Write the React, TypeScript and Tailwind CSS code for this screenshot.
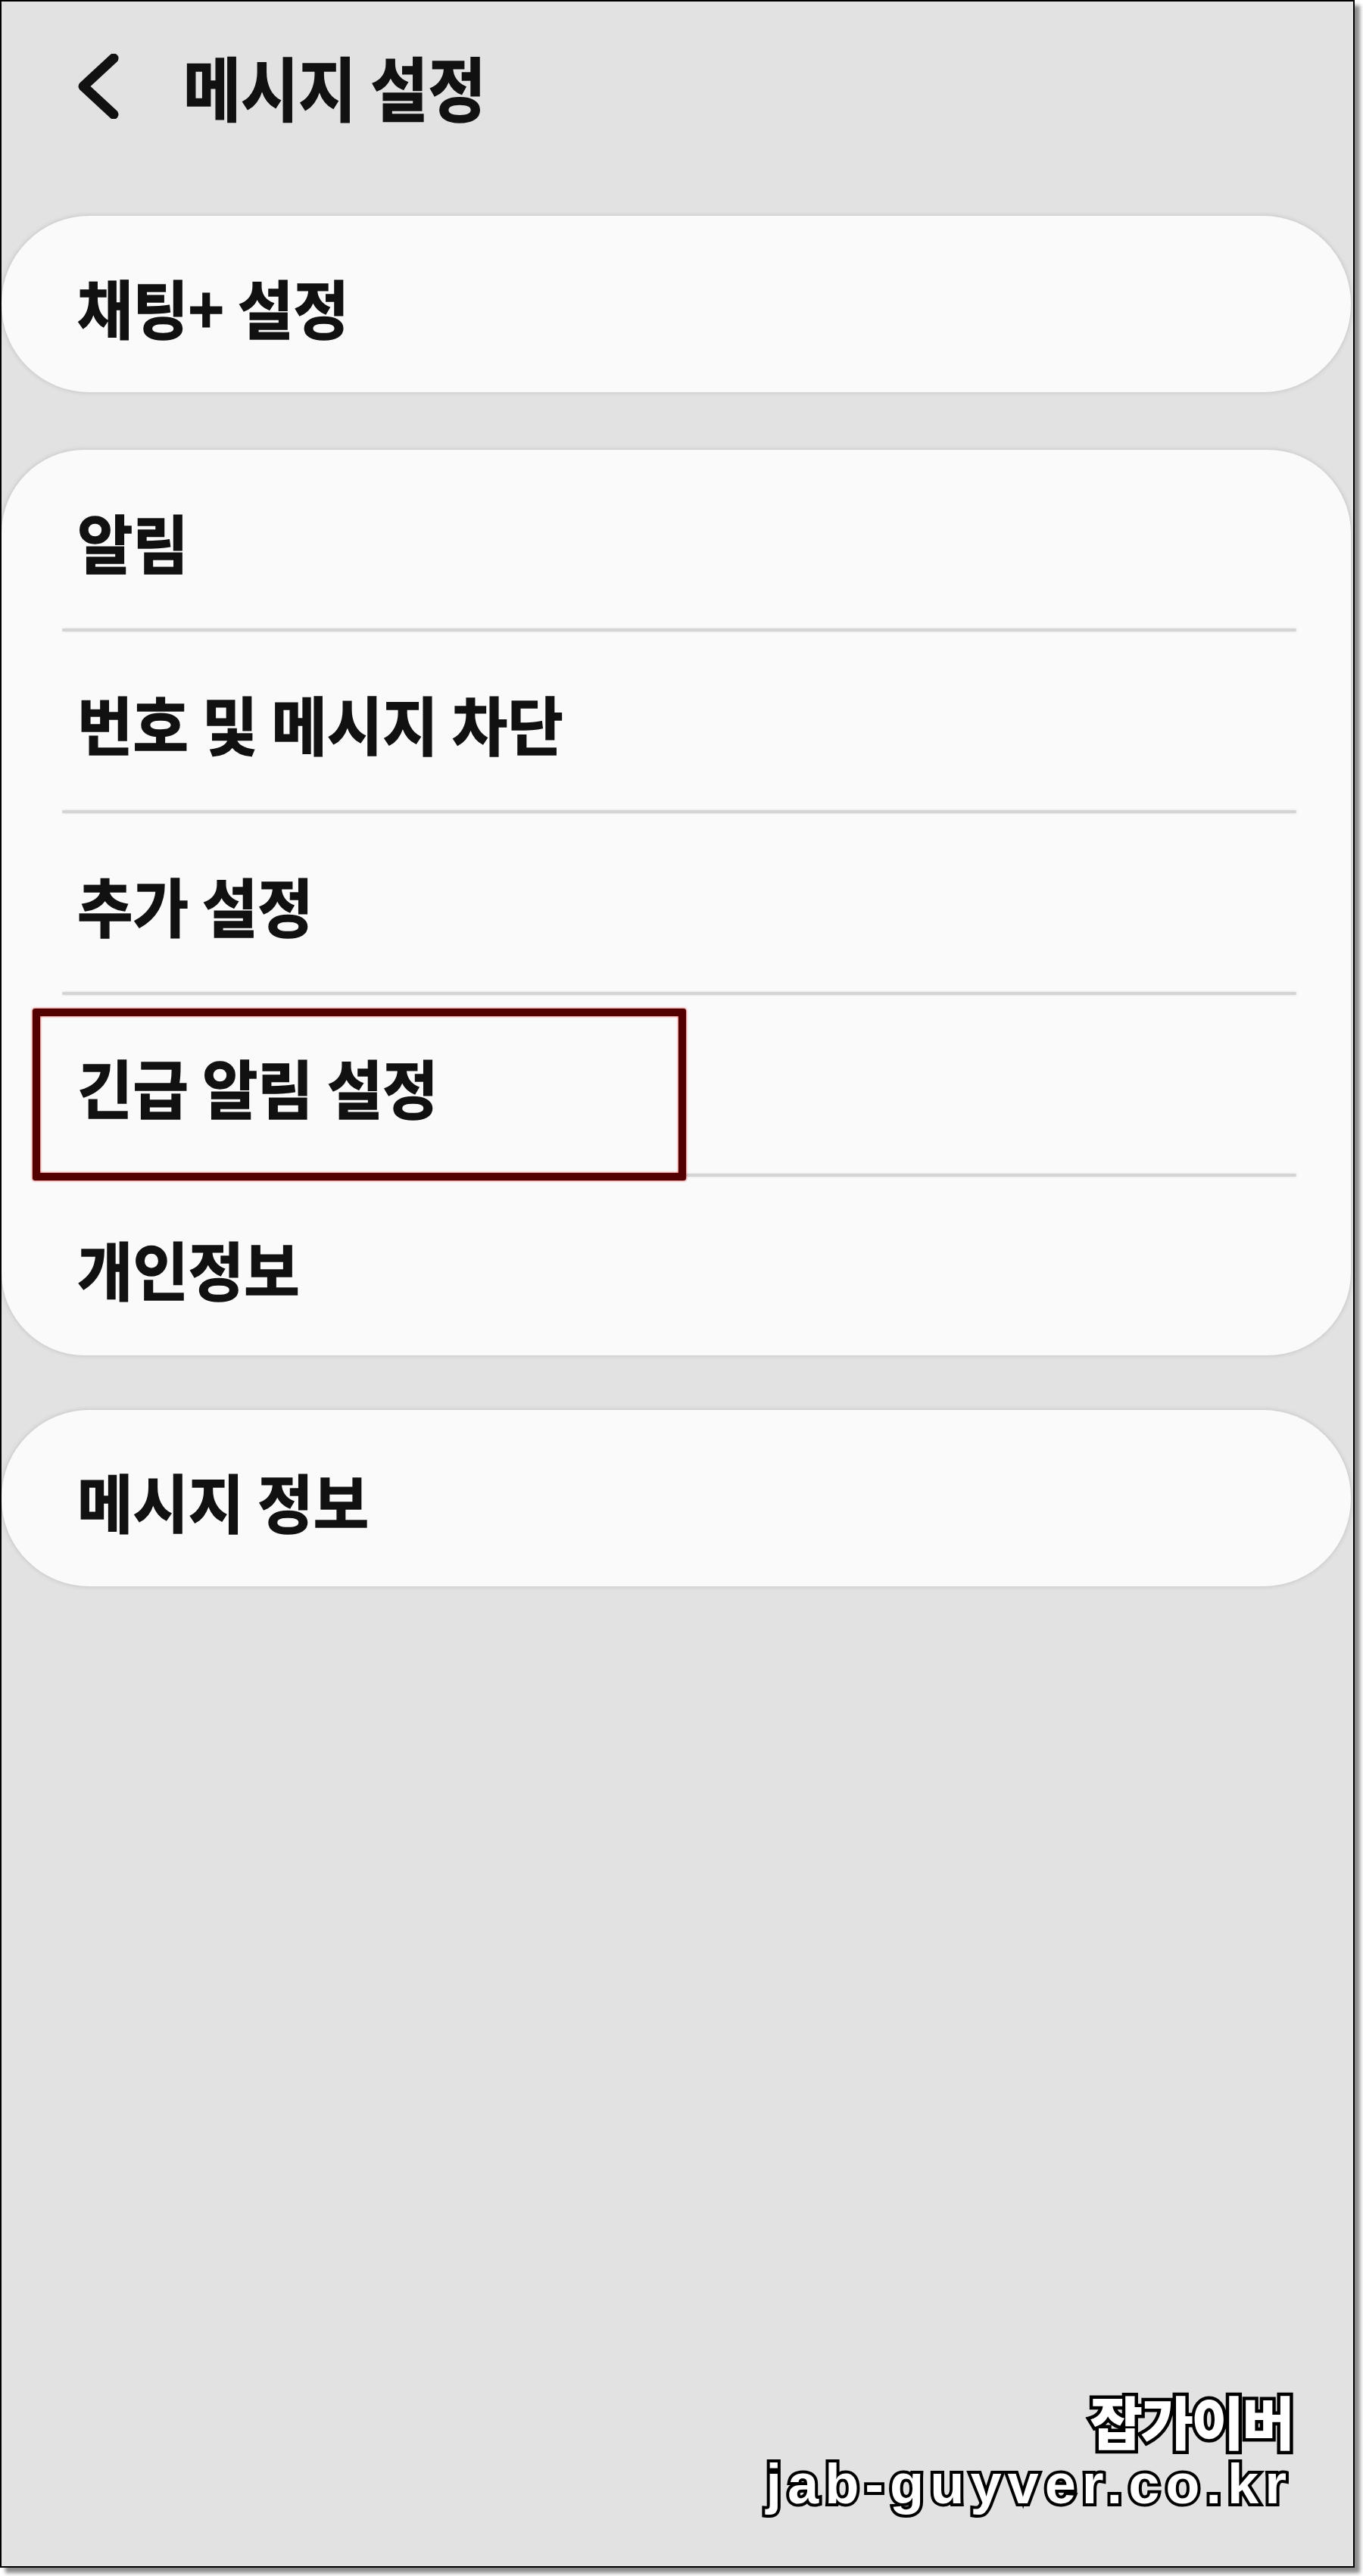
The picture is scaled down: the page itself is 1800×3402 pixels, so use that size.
import React from "react";

const KR = { fontFamily: '"Noto Sans CJK KR", "Noto Sans", sans-serif' };

function Label({ text }: { text: string }) {
  return (
    <span
      className="inline-block origin-left scale-x-[0.95] text-[84px] font-bold leading-none text-[#111] [-webkit-text-stroke:1.5px_#111]"
      style={KR}
    >
      {text}
    </span>
  );
}

function Row({ label, last }: { label: string; last?: boolean }) {
  return (
    <div>
      <div className="flex h-[236px] items-center pl-[100px] pt-[6px]">
        <Label text={label} />
      </div>
      {!last && (
        <div className="ml-[80px] mr-[72px] h-[4px] rounded-full bg-[#d4d4d4] shadow-[0_0_3px_rgba(0,0,0,0.12)]" />
      )}
    </div>
  );
}

function SingleCard({ label }: { label: string }) {
  return (
    <div className="mr-[3px] flex h-[233px] items-center rounded-[116px] bg-[#fafafa] pl-[100px] pt-[6px] shadow-[0_0_6px_rgba(0,0,0,0.16)]">
      <Label text={label} />
    </div>
  );
}

export default function App() {
  return (
    <div className="h-[3402px] w-[1800px] bg-white">
      <div className="relative h-[3391px] w-[1789px] border-2 border-black bg-[#e2e2e2] shadow-[7px_7px_5px_rgba(0,0,0,0.45)]">
        {/* header */}
        <div className="flex h-[222px] items-center pl-[98px]">
          <svg width="60" height="86" viewBox="0 0 60 86" className="mt-[2px]">
            <polyline
              points="50,6 10,43 50,80"
              fill="none"
              stroke="#111"
              strokeWidth="13"
              strokeLinecap="round"
              strokeLinejoin="round"
            />
          </svg>
          <span
            className="ml-[82px] inline-block origin-left scale-x-[0.9] text-[92px] font-bold leading-none text-[#111] [-webkit-text-stroke:1.5px_#111]"
            style={KR}
          >
            메시지 설정
          </span>
        </div>

        <div className="mt-[61px] flex flex-col">
          <SingleCard label="채팅+ 설정" />

          <div className="relative mr-[3px] mt-[76px] rounded-[110px] bg-[#fafafa] shadow-[0_0_6px_rgba(0,0,0,0.16)]">
            <Row label="알림" />
            <Row label="번호 및 메시지 차단" />
            <Row label="추가 설정" />
            <Row label="긴급 알림 설정" />
            <Row label="개인정보" last />
            {/* red highlight box (annotation overlay) */}
            <div className="pointer-events-none absolute left-[41px] top-[738px] h-[227px] w-[863px] rounded-[3px] border-[10px] border-[#520000] shadow-[0_0_3px_#d40000,inset_0_0_3px_#d40000]" />
          </div>

          <div className="mt-[72px]">
            <SingleCard label="메시지 정보" />
          </div>
        </div>

        {/* watermark */}
        <div className="absolute right-[80px] top-[3158px] flex flex-col items-end">
          <span
            className="text-[76px] font-black leading-[72px] tracking-[-3px] text-white [-webkit-text-stroke:9px_#000] [paint-order:stroke_fill]"
            style={KR}
          >
            잡가이버
          </span>
          <span
            className="mt-[16px] text-[74px] font-bold leading-[66px] tracking-[8px] text-white [-webkit-text-stroke:8px_#000] [paint-order:stroke_fill]"
            style={{ fontFamily: '"Liberation Sans", Arial, sans-serif' }}
          >
            jab-guyver.co.kr
          </span>
        </div>
      </div>
    </div>
  );
}
